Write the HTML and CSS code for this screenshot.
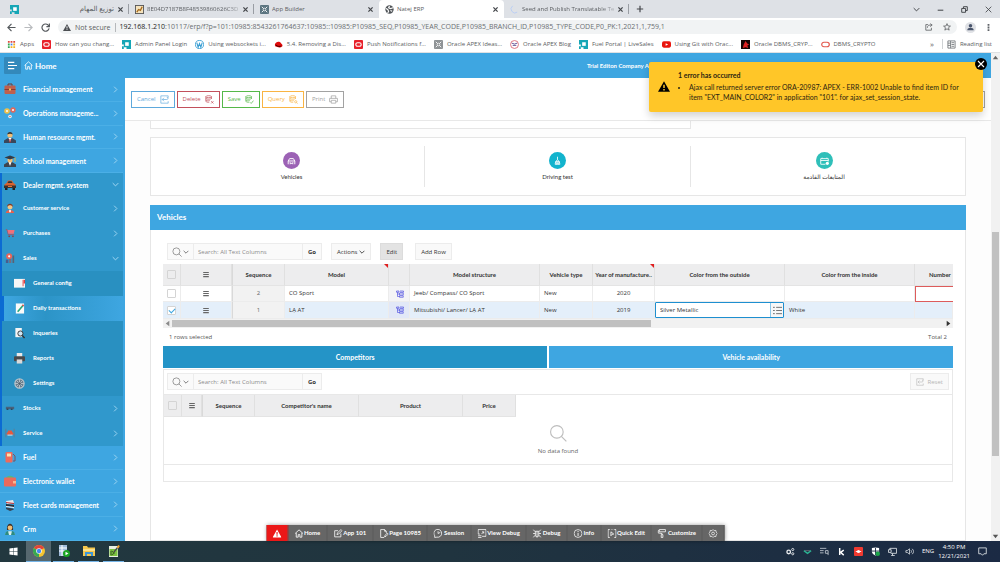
FILE: index.html
```html
<!DOCTYPE html>
<html lang="en">
<head>
<meta charset="utf-8">
<title>Natej ERP</title>
<link rel="stylesheet" href="styles.css">
</head>
<body>
<svg class="defs" aria-hidden="true">
  <symbol id="x" viewBox="0 0 10 10"><path d="M2 2l6 6M8 2L2 8" fill="none" stroke="currentColor" stroke-width="1.8"/></symbol>
  <symbol id="right" viewBox="0 0 10 10"><path d="M3 1l4 4-4 4" fill="none" stroke="currentColor" stroke-width="1.3"/></symbol>
  <symbol id="down" viewBox="0 0 10 10"><path d="M1 3l4 4 4-4" fill="none" stroke="currentColor" stroke-width="1.4"/></symbol>
  <symbol id="search" viewBox="0 0 16 16"><circle cx="7" cy="7" r="5.6" fill="none" stroke="currentColor"/><path d="M11 11l4.400 4.400" stroke="currentColor"/></symbol>
  <symbol id="burger" viewBox="0 0 10 10"><path d="M1 2h8M1 5h8M1 8h8" stroke="currentColor" stroke-width="1.500"/></symbol>
  <symbol id="home" viewBox="0 0 16 16"><path d="M1 8l7-6.500L15 8M3 7v7.500h3.500V10h3v4.500H13V7" fill="none" stroke="currentColor" stroke-width="1.500"/></symbol>
  <symbol id="warn" viewBox="0 0 16 14"><path fill-rule="evenodd" d="M8 0L16 14H0zM7 4.500v4.500h2V4.500zM7 10.300v1.900h2v-1.900z" fill="currentColor"/></symbol>
  <symbol id="undo" viewBox="0 0 16 16"><path d="M14.500 5V1.500h-13v13h13V11M4 8h8c3 0 3-4 0-4M7 5L4 8l3 3" fill="none" stroke="currentColor" stroke-width="1.200"/></symbol>
  <symbol id="db" viewBox="0 0 16 16"><path d="M1.500 3v8c0 2 5 2 6 2M11.500 3v4M1.500 6c1 2 9 2 10 0M1.500 9c1 1.500 5 1.500 7 1" fill="none" stroke="currentColor" stroke-width="1.300"/><ellipse cx="6.500" cy="3" rx="5" ry="1.800" fill="none" stroke="currentColor" stroke-width="1.300"/></symbol>
  <symbol id="tree" viewBox="0 0 16 16"><path d="M1 2h5v2.500H1zM3 4.500V13h4M3 8h4M7 6h7.500v4H7zM7 11.500h7.500v3H7zM8 2h7v2.500H8" fill="none" stroke="currentColor" stroke-width="1.300"/></symbol>
  <symbol id="oracle" viewBox="0 0 10 10"><rect width="10" height="10" rx="1" fill="#e8202a"/><rect x="2" y="3" width="6" height="4" rx="2" fill="none" stroke="#fff" stroke-width="1.200"/></symbol>
  <symbol id="teal" viewBox="0 0 10 10"><path d="M0 0h10v10H5V8H2V5H0z" fill="#16a6b6"/><rect x="3.500" y="2.500" width="4" height="4" fill="#fff"/><path d="M0 7h2v3H0z" fill="#16a6b6"/></symbol>
  <symbol id="apex" viewBox="0 0 10 10"><rect width="10" height="10" rx="1" fill="currentColor"/><path d="M2 2l2 2m2 2l2 2M8 2L6 4M4 6L2 8" stroke="#fff"/><circle cx="5" cy="5" r="1.500" fill="none" stroke="#fff" stroke-width=".8"/></symbol>
</svg>

<header class="browser">
  <div class="tabs">
    <div class="tab"><svg class="fav"><use href="#teal"/></svg><span class="tab-title" dir="rtl">توزيع المهام</span><button class="close" aria-label="Close tab"><svg><use href="#x"/></svg></button></div>
    <div class="tab"><svg class="fav" viewBox="0 0 10 10"><rect x=".5" y=".5" width="9" height="9" fill="#f5e3bd" stroke="#555"/><path d="M2 8l2-3 2 1 2-4" fill="none" stroke="#a66a1c" stroke-width="1.500"/></svg><span class="tab-title fade">8E04D7187B8F48539860626C3D</span><button class="close" aria-label="Close tab"><svg><use href="#x"/></svg></button></div>
    <div class="tab last-bg"><svg class="fav slate"><use href="#apex"/></svg><span class="tab-title">App Builder</span><button class="close" aria-label="Close tab"><svg><use href="#x"/></svg></button></div>
    <div class="tab active"><svg class="fav" viewBox="0 0 10 10"><circle cx="5" cy="5" r="4.600" fill="#4f5357"/><path d="M1 4l2 1 1 2-1 2M5 1l-1 2 2 1 3-1M6 6l2 1" stroke="#fff" fill="none" stroke-width="1.300"/></svg><span class="tab-title">Natej ERP</span><button class="close" aria-label="Close tab"><svg><use href="#x"/></svg></button></div>
    <div class="tab"><svg class="fav" viewBox="0 0 10 10"><path d="M3 1a4.300 4.300 0 1 0 5 7" fill="none" stroke="#b8cdf5"/></svg><span class="tab-title fade">Seed and Publish Translatable Te</span><button class="close" aria-label="Close tab"><svg><use href="#x"/></svg></button></div>
    <button class="new-tab" aria-label="New tab"><svg viewBox="0 0 10 10"><path d="M5 1v8M1 5h8" stroke="currentColor" stroke-width="1.500"/></svg></button>
    <div class="window-controls">
      <button aria-label="Search tabs"><svg><use href="#down"/></svg></button>
      <button aria-label="Minimize"><svg viewBox="0 0 10 10"><path d="M1 6h8" stroke="currentColor" stroke-width="1.500"/></svg></button>
      <button aria-label="Restore"><svg viewBox="0 0 10 10"><path d="M1 3.500h5.500V9H1zM3.500 3V1H9v5.500H7" fill="none" stroke="currentColor" stroke-width="1.400"/></svg></button>
      <button aria-label="Close"><svg viewBox="0 0 10 10"><path d="M1 1l8 8M9 1L1 9" stroke="currentColor" stroke-width="1.200"/></svg></button>
    </div>
  </div>
  <div class="address-row">
    <button aria-label="Back"><svg viewBox="0 0 10 10"><path d="M9.500 5H1M5 1L1 5l4 4" fill="none" stroke="#55595d" stroke-width="1.300"/></svg></button>
    <button aria-label="Forward"><svg viewBox="0 0 10 10"><path d="M.5 5H9M5 1l4 4-4 4" fill="none" stroke="#b9bbbe" stroke-width="1.300"/></svg></button>
    <button aria-label="Reload"><svg viewBox="0 0 10 10"><path d="M8.500 3A4 4 0 1 0 9 6M9.300.5V4H6" fill="none" stroke="#55595d" stroke-width="1.300"/></svg></button>
    <div class="omnibox">
      <svg class="alert"><use href="#warn"/></svg><span class="insecure">Not secure</span>
      <span class="url"><b>192.168.1.210</b>:10117/erp/f?p=101:10985:8543261764637:10985::10985:P10985_SEQ,P10985_YEAR_CODE,P10985_BRANCH_ID,P10985_TYPE_CODE,P0_PK:1,2021,1,759,1</span>
      <svg class="omni-icon" viewBox="0 0 10 10"><path d="M4 2H1v7h7V6M3 6c0-3 2-3.500 5-3.500M6.500.8L9 2.500 6.500 4.500" fill="none" stroke="currentColor"/></svg>
      <svg class="omni-icon" viewBox="0 0 10 10"><path d="M5 .8l1.200 2.900 3.100.2-2.400 2 .8 3L5 7.300 2.300 8.900l.8-3-2.400-2 3.100-.2z" fill="none" stroke="currentColor"/></svg>
    </div>
    <svg class="avatar" viewBox="0 0 12 12"><circle cx="6" cy="6" r="6" fill="#dfe1e5"/><circle cx="6" cy="4" r="1.900" fill="#49546b"/><path d="M2.500 9c0-3.500 7-3.500 7 0z" fill="#49546b"/></svg>
    <button aria-label="Menu"><svg viewBox="0 0 10 10"><path d="M4 1h2v2H4zM4 4h2v2H4zM4 7h2v2H4z" fill="#5f6368"/></svg></button>
  </div>
  <nav class="bookmarks">
    <a href="#" class="apps"><svg viewBox="0 0 10 10"><path d="M1 1h2v2H1zM4 1h2v2H4zM7 1h2v2H7z" fill="#e0483b"/><path d="M1 4h2v2H1zM1 7h2v2H1z" fill="#36a853"/><path d="M4 4h2v2H4z" fill="#4285f4"/><path d="M4 7h2v2H4zM7 4h2v2H7zM7 7h2v2H7z" fill="#f2b01e"/></svg>Apps</a>
    <a href="#"><svg><use href="#oracle"/></svg>How can you chang...</a>
    <a href="#"><svg><use href="#teal"/></svg>Admin Panel Login</a>
    <a href="#"><svg viewBox="0 0 10 10"><circle cx="5" cy="5" r="4.500" fill="#fff" stroke="#3b9fd4"/><path d="M2 3l1.500 5L5 4l1.500 4L8 3" fill="none" stroke="#3b9fd4" stroke-width="1.200"/></svg>Using websockets i...</a>
    <a href="#"><svg viewBox="0 0 10 10"><path d="M1 5c1-4 6-4 7-1 3 2 1 5-3 4S1 7 1 5z" fill="#e10b0b"/><path d="M2 5.500c2 2 5 2 6 1" stroke="#300" fill="none"/></svg>5.4. Removing a Dis...</a>
    <a href="#"><svg><use href="#oracle"/></svg>Push Notifications f...</a>
    <a href="#"><svg class="grey"><use href="#apex"/></svg>Oracle APEX Ideas...</a>
    <a href="#"><svg viewBox="0 0 10 10"><circle cx="5" cy="5" r="4.400" fill="#fff" stroke="#db6a79"/><path d="M2 3.500l3 1 3-1M3 6h4" stroke="#5a4a90" fill="none"/></svg>Oracle APEX Blog</a>
    <a href="#"><svg><use href="#teal"/></svg>Fuel Portal | LiveSales</a>
    <a href="#"><svg viewBox="0 0 10 10"><rect y="1.500" width="10" height="7" rx="2" fill="#e9150e"/><path d="M4 3.500v3L6.800 5z" fill="#fff"/></svg>Using Git with Orac...</a>
    <a href="#"><svg viewBox="0 0 10 10"><rect width="10" height="10" fill="#150505"/><path d="M5 1l2 3 2 1-2 1 1 3-3-1-3 1 1-4z" fill="#d22"/></svg>Oracle DBMS_CRYP...</a>
    <a href="#"><svg viewBox="0 0 10 10"><rect x=".8" y="2.500" width="8.400" height="5" rx="2.500" fill="none" stroke="#e2574c" stroke-width="1.300"/></svg>DBMS_CRYPTO</a>
    <span class="more">»</span>
    <a href="#" class="reading"><svg viewBox="0 0 10 10"><path d="M1 1h8v8H1zM4 1v8M5 3h3M5 5h3M5 7h3M1 3.500h3M1 6h3" fill="none" stroke="#6b6f73" stroke-width=".9"/></svg>Reading list</a>
  </nav>
</header>

<div class="viewport">
  <div class="app">
    <header class="app-header">
      <button class="nav-toggle" aria-label="Toggle menu"><svg viewBox="0 0 10 10"><path d="M0 1.500h7M0 5h10M0 8.500h7" stroke="currentColor" stroke-width="1.300"/></svg></button>
      <a href="#" class="brand"><svg><use href="#home"/></svg>Home</a>
      <span class="company">Trial Editon Company A</span>
    </header>
    <div class="app-body">
      <nav class="sidebar">
        <a href="#"><svg viewBox="0 0 12 12"><path d="M4 3V1h4v2" fill="none" stroke="#6b3a35"/><rect x="0.500" y="2.500" width="11" height="8.500" rx="1" fill="#c0604d"/><path d="M.5 6.500h11" stroke="#8a3b31"/><path d="M5 5.500h2v2H5z" fill="#f0c05a"/></svg><span>Financial management</span><svg class="chev"><use href="#right"/></svg></a>
        <a href="#"><svg viewBox="0 0 12 12"><circle cx="3" cy="4" r="2.800" fill="#f0c04a"/><circle cx="3" cy="4" r="1" fill="#fff"/><circle cx="9" cy="3" r="2.700" fill="#e2695b"/><circle cx="9" cy="3" r="1" fill="#fff"/><circle cx="6" cy="9.500" r="1.800" fill="#dff3fb"/><circle cx="6" cy="9.500" r=".8" fill="#e2695b"/></svg><span>Operations manageme...</span><svg class="chev"><use href="#right"/></svg></a>
        <a href="#"><svg viewBox="0 0 12 12"><path d="M0 12V9.500L4 7h4l4 2.500V12z" fill="#39475c"/><path d="M4.500 7h3L6 11z" fill="#fff"/><path d="M5.500 8h1v3.500h-1z" fill="#d33"/><circle cx="6" cy="4" r="2.600" fill="#f2bd73"/><path d="M3.400 3.500C3 0 9 0 8.600 3.500 7 2.500 5 2.500 3.400 3.500z" fill="#333"/></svg><span>Human resource mgmt.</span><svg class="chev"><use href="#right"/></svg></a>
        <a href="#"><svg viewBox="0 0 12 12"><path d="M0 12V9.500L4 7h4l4 2.500V12z" fill="#3d444f"/><path d="M4.500 7h3L6 11z" fill="#fff"/><circle cx="6" cy="5" r="2.500" fill="#f2bd73"/><path d="M6 .5l5.500 2L6 4.500.5 2.500z" fill="#333b48"/><path d="M11 2.500V7" stroke="#e0b040"/></svg><span>School management</span><svg class="chev"><use href="#right"/></svg></a>
        <a href="#" class="open"><svg viewBox="0 0 12 12"><path d="M2.500 4L4 1.500h4L9.500 4l2 1.500V9H.5V5.500z" fill="#d9622f"/><path d="M3.500 4l1-1.800h3l1 1.800z" fill="#333"/><path d="M0 6.500h12V9H0z" fill="#3a302c"/><path d="M1 9h2.500v2H1zM8.500 9H11v2H8.500z" fill="#222"/><path d="M4 7h4v1H4z" fill="#e5763e"/></svg><span>Dealer mgmt. system</span><svg class="chev"><use href="#down"/></svg></a>
        <div class="sub">
          <a href="#"><svg viewBox="0 0 12 12"><path d="M1 12c0-5 10-5 10 0z" fill="#e8604c"/><circle cx="6" cy="4.500" r="3" fill="#f4c584"/><path d="M2.500 5C2-.5 10-.5 9.500 5 8 2 4 2 2.500 5z" fill="#7a3a2a"/><path d="M5 8h2v3H5z" fill="#fff"/></svg><span>Customer service</span><svg class="chev"><use href="#right"/></svg></a>
          <a href="#"><svg viewBox="0 0 12 12"><path d="M1 2h1.500l1.500 6h7" fill="none" stroke="#b34a5c"/><path d="M3 2.500h8.500l-1 4.500H4z" fill="#f0707a"/><circle cx="5" cy="10" r="1" fill="#933"/><circle cx="9.500" cy="10" r="1" fill="#933"/></svg><span>Purchases</span><svg class="chev"><use href="#right"/></svg></a>
          <a href="#"><svg viewBox="0 0 12 12"><circle cx="5" cy="4" r="3.600" fill="#e8655a"/><circle cx="5" cy="4" r="1.300" fill="#fff"/><path d="M1 8h3v4H1z" fill="#4a5b8c"/><path d="M5 7h2.500v5H5z" fill="#7b6a78"/><path d="M9 3h2v9H9z" fill="#5a6272"/></svg><span>Sales</span><svg class="chev"><use href="#down"/></svg></a>
          <div class="subsub">
            <a href="#"><svg viewBox="0 0 12 12"><rect y="1" width="12" height="9.500" fill="#f7f7f7"/><path d="M9 2h2v7H9z" fill="#e99"/><path d="M10.500 2H12v4h-1.500z" fill="#e04040"/></svg><span>General config</span></a>
            <a href="#" class="current"><svg viewBox="0 0 12 12"><rect x="2" y="0.500" width="9" height="11" fill="#fafafa"/><path d="M4 9.500l6-7" stroke="#2aa77a" stroke-width="1.800"/><path d="M9.300 3.200L10.500 2" stroke="#e05050" stroke-width="2"/></svg><span>Daily transactions</span></a>
            <a href="#"><svg viewBox="0 0 12 12"><path d="M1.500 0h7v10h-7z" fill="#f5f5f5"/><circle cx="7" cy="6" r="2.800" fill="#cfe6f5" stroke="#333"/><path d="M9 8l2.500 3" stroke="#333" stroke-width="1.500"/></svg><span>Inqueries</span></a>
            <a href="#"><svg viewBox="0 0 12 12"><path d="M3 0h6v5H3z" fill="#e9e9e9"/><rect y="3.500" width="12" height="5.500" rx="1" fill="#48484a"/><path d="M3 7h6v4.500H3z" fill="#d9d9d9"/></svg><span>Reports</span></a>
            <a href="#"><svg viewBox="0 0 12 12"><circle cx="6" cy="6" r="5" fill="#6c7f8e" stroke="#b9c3ca" stroke-width="1.400"/><path d="M6 1v10M1 6h10M2.500 2.500l7 7M9.500 2.500l-7 7" stroke="#b9c3ca"/><circle cx="6" cy="6" r="1.500" fill="#54616c"/></svg><span>Settings</span></a>
          </div>
          <a href="#"><svg viewBox="0 0 12 12"><path d="M1 4.500h10v3H1z" fill="#48617c"/><path d="M2 7.500h2M7 7.500h2" stroke="#222"/></svg><span>Stocks</span><svg class="chev"><use href="#right"/></svg></a>
          <a href="#"><svg viewBox="0 0 12 12"><path d="M1 1v10M11 1v10" stroke="#6a7a88"/><path d="M3 5l1-2h4l1 2 1 1v2H2V6z" fill="#e5593e"/><path d="M3 8h6v1H3z" fill="#eee"/></svg><span>Service</span><svg class="chev"><use href="#right"/></svg></a>
        </div>
        <a href="#"><svg viewBox="0 0 12 12"><rect x="1.500" y="1" width="7" height="10.500" rx="1" fill="#ef6a5b"/><path d="M3 2.500h4v3H3z" fill="#fbe3b0"/><path d="M9 3l2 2v5H9" fill="none" stroke="#7d5160"/></svg><span>Fuel</span><svg class="chev"><use href="#right"/></svg></a>
        <a href="#"><svg viewBox="0 0 12 12"><path d="M2 3c2-3 6-3 8 0z" fill="#58b879"/><rect y="2.500" width="12" height="9" rx="1" fill="#ea6a5c"/><path d="M9 6h3v2.500H9z" fill="#f7b68f"/></svg><span>Electronic wallet</span><svg class="chev"><use href="#right"/></svg></a>
        <a href="#"><svg viewBox="0 0 12 12"><path d="M2 2l7-1 1 3-7 1z" fill="#e9e9e9"/><path d="M2 3l8 1v1L2 4z" fill="#cf3030"/><path d="M2 5l8 1v2L2 7z" fill="#262f3a"/><path d="M2 7.500l8 1" stroke="#eee"/><path d="M2 8.500l7 1 1 1-4 1.500-4-2z" fill="#35414f"/></svg><span>Fleet cards management</span><svg class="chev"><use href="#right"/></svg></a>
        <a href="#"><svg viewBox="0 0 12 12"><path d="M1 12c0-5 10-5 10 0z" fill="#d9efe9"/><path d="M1 12c0-3 2-4 3-4l1 4zM11 12c0-3-2-4-3-4l-1 4z" fill="#2c8b80"/><path d="M3 7C2-1.500 10-1.500 9 7z" fill="#3a2f2a"/><circle cx="6" cy="4.800" r="2.400" fill="#f2bd73"/></svg><span>Crm</span><svg class="chev"><use href="#right"/></svg></a>
      </nav>

      <main class="main">
        <div class="actions">
          <button class="act blue">Cancel<svg><use href="#undo"/></svg></button>
          <button class="act red">Delete<svg viewBox="0 0 16 16"><use href="#db"/><path d="M11 11l4 4M15 11l-4 4" stroke="currentColor" stroke-width="1.300"/></svg></button>
          <button class="act green">Save<svg viewBox="0 0 16 16"><use href="#db"/><path d="M9 13l2 2 4-5" fill="none" stroke="currentColor" stroke-width="1.300"/></svg></button>
          <button class="act orange">Query<svg viewBox="0 0 16 16"><use href="#db"/><circle cx="12" cy="12" r="2" fill="none" stroke="currentColor" stroke-width="1.200"/><path d="M13.500 13.500l2 2" stroke="currentColor"/></svg></button>
          <button class="act grey">Print<svg viewBox="0 0 16 16"><path d="M4 6V1.500h8V6M4 12H1V6h14v6h-3M4 9.500h8v5H4z" fill="none" stroke="currentColor" stroke-width="1.300"/></svg></button>
          <button class="act grey end" aria-label="More"><svg><use href="#down"/></svg></button>
        </div>
        <div class="content">
          <section class="strip"></section>
          <section class="cards">
            <a href="#"><svg class="dot" viewBox="0 0 18 18"><circle cx="9" cy="9" r="9" fill="#9c62b5"/><path d="M5.500 13V9.500L7 7h4l1.500 2.500V13M5.500 9.500h7M7 11h1M10 11h1M7.500 13v-1h3v1" fill="none" stroke="#fff"/></svg>Vehicles</a>
            <a href="#"><svg class="dot" viewBox="0 0 18 18"><circle cx="9" cy="9" r="9" fill="#12b3cd"/><path d="M9 5v3l-2 2.500h4L9 8M6.500 13l.5-2.500h4l.5 2.500zM8 13v-1h2v1" fill="none" stroke="#fff" stroke-width=".9"/></svg>Driving test</a>
            <a href="#"><svg class="dot" viewBox="0 0 18 18"><circle cx="9" cy="9" r="9" fill="#2fbfb9"/><path d="M10 13H5V7h8v3M5 9h8M6.500 6v1M11.500 6v1" fill="none" stroke="#fff" stroke-width=".9"/><circle cx="12" cy="12" r="1.700" fill="#fff"/></svg>المتابعات القادمة</a>
          </section>
          <section class="vehicles">
            <h2>Vehicles</h2>
            <div class="vehicles-body">
              <div class="grid-tools">
                <div class="finder">
                  <button class="find-menu" aria-label="Search options"><svg class="lens"><use href="#search"/></svg><svg class="caret"><use href="#down"/></svg></button>
                  <input type="text" aria-label="Search" placeholder="Search: All Text Columns">
                  <button class="go">Go</button>
                </div>
                <button class="tool">Actions<svg class="caret"><use href="#down"/></svg></button>
                <button class="tool pressed">Edit</button>
                <button class="tool add">Add Row</button>
              </div>
              <div class="grid-wrap">
              <table class="grid">
                <colgroup><col class="c-check"><col class="c-menu"><col class="c-seq"><col class="c-model"><col class="c-icon"><col class="c-wide"><col class="c-seq"><col class="c-year"><col class="c-wide"><col class="c-wide"><col></colgroup>
                <thead><tr><th><input type="checkbox" aria-label="Select all"></th><th><svg class="rows"><use href="#burger"/></svg></th><th class="frozen">Sequence</th><th class="required">Model</th><th></th><th>Model structure</th><th>Vehicle type</th><th class="required">Year of manufacture..</th><th>Color from the outside</th><th>Color from the inside</th><th class="cut">Number</th></tr></thead>
                <tbody>
                  <tr><td><input type="checkbox" aria-label="Select row 2"></td><td class="mid"><svg class="rows"><use href="#burger"/></svg></td><td class="frozen mid">2</td><td>CO Sport</td><td class="tree"><svg><use href="#tree"/></svg></td><td>Jeeb/ Compass/ CO Sport</td><td>New</td><td class="mid">2020</td><td></td><td></td><td class="invalid"></td></tr>
                  <tr class="selected"><td><input type="checkbox" aria-label="Select row 1" checked></td><td class="mid"><svg class="rows"><use href="#burger"/></svg></td><td class="frozen mid">1</td><td>LẠ AT</td><td class="tree"><svg><use href="#tree"/></svg></td><td>Mitsubishi/ Lancer/ LẠ AT</td><td>New</td><td class="mid">2019</td><td class="editing"><div class="lov"><input type="text" aria-label="Color from the outside" value="Silver Metallic"><button aria-label="List of values"><svg viewBox="0 0 10 10"><path d="M0 1.500h2M0 5h2M0 8.500h2M3.500 1.500H10M3.500 5H10M3.500 8.500H10" stroke="currentColor"/></svg></button></div></td><td>White</td><td></td></tr>
                </tbody>
              </table>
              </div>
              <div class="hscroll"><svg viewBox="0 0 10 10"><path d="M7 2v6L3 5z" fill="#8a8a8a"/></svg><div class="track"><div class="thumb"></div></div><svg viewBox="0 0 10 10"><path d="M3 2v6l4-3z" fill="#333"/></svg></div>
              <div class="grid-foot"><span>1 rows selected</span><span>Total 2</span></div>
              <div class="detail-tabs"><button class="on">Competitors</button><button>Vehicle availability</button></div>
              <div class="detail">
                <div class="grid-tools">
                  <div class="finder">
                    <button class="find-menu" aria-label="Search options"><svg class="lens"><use href="#search"/></svg><svg class="caret"><use href="#down"/></svg></button>
                    <input type="text" aria-label="Search competitors" placeholder="Search: All Text Columns">
                    <button class="go">Go</button>
                  </div>
                  <button class="tool reset"><svg><use href="#undo"/></svg>Reset</button>
                </div>
                <table class="grid small">
                  <colgroup><col class="c-check"><col class="c-menu-s"><col class="c-seq"><col class="c-name"><col class="c-name"><col class="c-seq"></colgroup>
                  <thead><tr><th><input type="checkbox" aria-label="Select all competitors"></th><th><svg class="rows"><use href="#burger"/></svg></th><th class="frozen">Sequence</th><th>Competitor's name</th><th>Product</th><th>Price</th></tr></thead>
                </table>
                <div class="empty"><svg><use href="#search"/></svg>No data found</div>
                <div class="detail-foot"></div>
              </div>
            </div>
          </section>
        </div>
      </main>
    </div>

    <div class="notice" role="alert">
      <svg class="notice-icon"><use href="#warn"/></svg>
      <div><strong>1 error has occurred</strong>
      <ul><li>Ajax call returned server error ORA-20987: APEX - ERR-1002 Unable to find item ID for item "EXT_MAIN_COLOR2" in application "101". for ajax_set_session_state.</li></ul></div>
      <button class="notice-close" aria-label="Close"><svg viewBox="0 0 10 10"><path d="M2 2l6 6M8 2L2 8" stroke="currentColor" stroke-width="1.100"/></svg></button>
    </div>

    <nav class="devbar">
      <button class="err" aria-label="Errors"><svg><use href="#warn"/></svg></button>
      <button><svg><use href="#home"/></svg>Home</button>
      <button><svg viewBox="0 0 16 16"><path d="M13 8v6H2V3h6M6 10l1-3 6-6 2 2-6 6z" fill="none" stroke="currentColor" stroke-width="1.400"/></svg>App 101</button>
      <button><svg viewBox="0 0 16 16"><path d="M8 15H2V1h7l3 3v3M9 1v3h3M9 14l1-3 4-4 1.500 2-4 4z" fill="none" stroke="currentColor" stroke-width="1.400"/></svg>Page 10985</button>
      <button><svg viewBox="0 0 16 16"><path d="M2 12a7 7 0 1 1 4 2.500L2 15zM8 4v4l4-2" fill="none" stroke="currentColor" stroke-width="1.400"/></svg>Session</button>
      <button><svg viewBox="0 0 16 16"><path d="M4 9H1V1h14v12H8M7 9l4-4M8 5h3v3M1 12h6M1 15h6" fill="none" stroke="currentColor" stroke-width="1.400"/></svg>View Debug</button>
      <button><svg viewBox="0 0 16 16"><path d="M5 4h6v8c-1 3-5 3-6 0zM8 4v10M1 1l4 4M15 1l-4 4M1 8h4M11 8h4M1 15l4-4M15 15l-4-4" fill="none" stroke="currentColor" stroke-width="1.400"/></svg>Debug</button>
      <button><svg viewBox="0 0 16 16"><circle cx="8" cy="8" r="7" fill="none" stroke="currentColor" stroke-width="1.300"/><path d="M8 3.500v2M8 7v5.500" stroke="currentColor" stroke-width="1.600"/></svg>Info</button>
      <button><svg viewBox="0 0 16 16"><path d="M4 1H1v14h3M12 1h3v14h-3M6 1h1M9 1h1M6 5l5 4-3 .5L6 12z" fill="none" stroke="currentColor" stroke-width="1.400"/></svg>Quick Edit</button>
      <button><svg viewBox="0 0 16 16"><path d="M3 1h11v4H3zM3 3H1v4l7 1v2M6.500 10h3v5h-3z" fill="none" stroke="currentColor" stroke-width="1.400"/></svg>Customize</button>
      <button aria-label="Options"><svg viewBox="0 0 16 16"><path d="M8 1l2 2 3-.5.500 3L15.500 8l-2 2.500-.5 3-3-.5-2 2-2-2-3 .5-.5-3L.5 8l2-2.500.5-3L6 3z" fill="none" stroke="currentColor" stroke-width="1.300"/><circle cx="8" cy="8" r="2.500" fill="none" stroke="currentColor" stroke-width="1.300"/></svg></button>
    </nav>
  </div>
  <div class="vscroll"><svg viewBox="0 0 10 10"><path d="M2 7h6L5 3z" fill="#666"/></svg><div class="vtrack"><div class="vthumb"></div></div><svg viewBox="0 0 10 10"><path d="M2 3h6L5 7z" fill="#555"/></svg></div>
</div>

<footer class="taskbar">
  <button class="start" aria-label="Start"><svg viewBox="0 0 10 10"><path d="M.5 1.800L4.500 1.200v3.500h-4zM5 1.100L9.500.5v4.200H5zM.5 5.200h4v3.600L.5 8.200zM5 5.200h4.500v4.300L5 8.900z" fill="#fff"/></svg></button>
  <button class="task focus" aria-label="Chrome"><svg viewBox="0 0 12 12"><circle cx="6" cy="6" r="6" fill="#f4c430"/><path d="M6 6L.8 3A6 6 0 0 1 11.200 3z" fill="#e2453a"/><path d="M6 6L.8 3A6 6 0 0 0 6 12z" fill="#36a853"/><circle cx="6" cy="6" r="2.800" fill="#fff"/><circle cx="6" cy="6" r="2.200" fill="#4688f1"/></svg></button>
  <button class="task" aria-label="SQL Developer"><svg viewBox="0 0 12 12"><path d="M1 0h8v11H1z" fill="#9fb9d8"/><path d="M1 3h8M1 6h8M4 0v11" stroke="#fff"/><circle cx="8.500" cy="8.500" r="3.500" fill="#19a51f"/><path d="M7.500 6.800v3.400l3-1.700z" fill="#fff"/></svg></button>
  <button class="task" aria-label="File Explorer"><svg viewBox="0 0 12 12"><path d="M0 1h4l1 1.500h7V11H0z" fill="#f6c64c"/><path d="M0 4h12v2H0z" fill="#fbe08c"/><path d="M2 7h8v4H8V9H4v2H2z" fill="#3d96d8"/></svg></button>
  <button class="task" aria-label="Notepad++"><svg viewBox="0 0 12 12"><path d="M1 1h9v11H1z" fill="#e9efe2"/><path d="M1.500 4h8v7h-8z" fill="#7cc242"/><path d="M3 6v4M3.500 6l3 2-3 2" fill="none" stroke="#375a20"/><path d="M6 7l4-5" stroke="#4a4a4a" stroke-width="1.300"/><path d="M9.500 3l1.500-2.500" stroke="#f0a030" stroke-width="2"/></svg></button>
  <div class="tray">
    <svg viewBox="0 0 10 10"><circle cx="3" cy="5.500" r="2" fill="none" stroke="#e6e9ec" stroke-width="1.500"/><circle cx="7.500" cy="2.800" r="1.200" fill="none" stroke="#e6e9ec"/><circle cx="7.500" cy="7.500" r="1.200" fill="none" stroke="#e6e9ec"/></svg>
    <svg viewBox="0 0 10 10"><path d="M1 4l4 3 4-3" fill="none" stroke="#2bb594" stroke-width="1.500"/><path d="M2 4h6" stroke="#667"/></svg>
    <svg viewBox="0 0 10 10"><path d="M0 1.500h7M0 4h4M0 6.500h4M9 9V4H6v3h3" fill="none" stroke="#b9c1c9"/></svg>
    <svg viewBox="0 0 10 10"><path d="M3 1v8M7.500 3.500L4 6l3.500 3" fill="none" stroke="#fff" stroke-width="1.600"/></svg>
    <svg viewBox="0 0 10 10"><rect width="10" height="10" rx="1" fill="#f13a30"/><circle cx="5" cy="5" r="1.800" fill="#fff"/><path d="M2 5h6" stroke="#fff"/></svg>
    <svg viewBox="0 0 10 10"><path d="M1 1l4-.5L9 1v4c0 3-4 4.500-4 4.500S1 8 1 5z" fill="#fff"/><path d="M5 1v8M1 4.500h8" stroke="#1b2b42"/><circle cx="7.500" cy="7.500" r="2.500" fill="#1ca54a"/></svg>
    <svg viewBox="0 0 10 10"><path d="M2 3V1.500h7.500V7H3M5 7v2.500M3.500 9.500h4M.5 3h3v3h-3z" fill="none" stroke="#d6dbe0"/></svg>
    <svg viewBox="0 0 10 10"><path d="M1 4h1.500L5 2v6L2.500 6H1zM6.500 3.500c1 1 1 2 0 3M8 2c2 2 2 4 0 6" fill="none" stroke="#d6dbe0" stroke-width=".9"/></svg>
    <div class="clock"><span>ENG</span><time>4:50 PM<br>12/21/2021</time></div>
    <svg viewBox="0 0 10 10"><path d="M.8 1h8.400v6.500H6.500L5 9.200 3.500 7.500H.8z" fill="none" stroke="#d6dbe0"/></svg>
  </div>
</footer>
</body>
</html>
```
FILE: styles.css
```css
* { box-sizing: border-box; }
html, body { height: 100%; }
body {
  margin: 0; display: flex; flex-direction: column; overflow: hidden;
  font-family: Lato, "Noto Sans", "DejaVu Sans", sans-serif; font-size: 7px; line-height: 10px; color: #333; background: #fff;
}
a { color: inherit; text-decoration: none; }
button, input { font: inherit; color: inherit; margin: 0; padding: 0; border: 0; background: none; }
button { display: flex; align-items: center; justify-content: center; }
svg { display: block; flex: none; width: 9px; height: 9px; }
.defs { position: absolute; width: 0; height: 0; }

/* Browser frame */
.browser { flex: none; font-family: "Open Sans", "DejaVu Sans", sans-serif; color: #5a5d61; }
.tabs { display: flex; align-items: center; height: 18px; background: #dee1e6; }
.tab { display: flex; align-items: center; gap: 3px; width: 125px; height: 18px; padding: 0 5px 0 6px; }
.tab:not(.active) { background: linear-gradient(#999da3, #999da3) right center / 1px 10px no-repeat; }
.tab.last-bg { background: none; }
.tab.active { background: #fff; border-radius: 4px 4px 0 0; }
.tab:first-child { width: 129px; padding-left: 10px; }
.tab-title { flex: 1; min-width: 0; font-size: 6px; white-space: nowrap; overflow: hidden; }
.tab:first-child .tab-title { font-size: 7px; }
.tab-title.fade { mask-image: linear-gradient(90deg, #000 85%, rgba(0, 0, 0, .3)); }
.close svg { width: 7px; height: 7px; }
.close { color: #44474b; }
.slate { color: #5c7580; }
.grey { color: #8f9396; }
.new-tab { width: 22px; color: #44474b; }
.new-tab svg { width: 8px; height: 8px; }
.window-controls { display: flex; margin-left: auto; color: #44474b; }
.window-controls button { width: 24px; }
.window-controls svg { width: 7px; height: 7px; }
.address-row { display: flex; align-items: center; gap: 8px; height: 18px; padding: 0 7px; }
.omnibox { flex: 1; min-width: 0; display: flex; align-items: center; gap: 4px; height: 14px; padding: 0 6px 0 5px; border-radius: 7px; background: #f1f3f4; }
.omnibox .alert { width: 8px; height: 7px; color: #4c4f53; }
.insecure { padding-right: 4px; border-right: 1px solid #b5b8bb; line-height: 9px; }
.url { flex: 1; min-width: 0; overflow: hidden; white-space: nowrap; color: #6b6f73; }
.url b { font-weight: 400; color: #222; }
.omni-icon { width: 8px; height: 8px; margin-left: 6px; }
.avatar { width: 11px; height: 11px; }
.bookmarks { display: flex; align-items: center; gap: 8px; height: 17px; padding: 0 8px 0 7px; font-size: 6px; white-space: nowrap; border-bottom: 1px solid #dfe1e3; }
.bookmarks a { display: flex; align-items: center; gap: 4px; }
.bookmarks .more { margin-left: auto; font-size: 8px; }
.bookmarks .reading { padding-left: 4px; border-left: 1px solid #cfd2d4; }

/* Application shell */
.viewport { flex: 1; min-height: 0; display: flex; }
.app { flex: 1; min-width: 0; display: flex; flex-direction: column; position: relative; }
.app-header { flex: none; display: flex; align-items: center; height: 25px; padding-left: 4px; background: #3ea6e1; color: #fff; font-weight: 700; }
.nav-toggle { width: 17px; height: 17px; background: #3389bb; border-radius: 1px; }
.brand { display: flex; align-items: center; gap: 2px; margin-left: 3px; font-size: 8px; }
.company { margin-left: auto; padding-right: 342px; font-size: 6px; }
.app-body { flex: 1; min-height: 0; display: flex; }
.sidebar { flex: none; display: flex; flex-direction: column; width: 125px; padding-right: 2px; background: #3ea6e1; color: #fff; font-weight: 700; }
.sidebar a { display: flex; align-items: center; padding: 0 4px; border-bottom: 1px solid #4bafe6; }
.sidebar > a { flex: 1; }
.sidebar a svg { width: 12px; height: 12px; }
.sidebar a span { flex: 1; margin-left: 7px; white-space: nowrap; }
.sidebar a .chev { width: 7px; height: 7px; color: #a5d8f3; }
.sidebar a.open, .sub { border-color: #2f97cb; border-left: 2px solid #0b6bd3; background: #3098cc; }
.sidebar a.open { padding-left: 2px; border-bottom: 0; }
.sub a { height: 25px; padding-left: 3px; border: 0; font-size: 6px; }
.sub a svg { width: 10px; height: 10px; }
.sub a span { margin-left: 8px; }
.subsub { background: #2990c1; }
.subsub a { padding-left: 12px; }
.subsub a svg { width: 11px; height: 11px; }
.subsub .current { padding-left: 10px; border-left: 2px solid #0b6bd3; background: linear-gradient(90deg, #3ea6e1, #2c94c7 35%, #3ea6e1); }

.main { flex: 1; min-width: 0; display: flex; flex-direction: column; background: #fdfdfd; font-family: "Open Sans", "DejaVu Sans", sans-serif; font-size: 6px; }
.actions { flex: none; display: flex; align-items: center; gap: 2px; height: 43px; padding: 0 6px; background: #fff; border-bottom: 1px solid #e8e8e8; }
.act { height: 17px; gap: 4px; padding: 0 5px; border: 1px solid; background: #fff; }
.act.blue { color: #5ea9dc; }
.act.red { color: #c2505c; }
.act.green { color: #55b849; }
.act.orange { color: #f9b443; }
.act.grey { color: #a2a2a2; }
.act.end { margin-left: auto; }
.content { flex: 1; min-height: 0; padding: 0 25px; display: flex; flex-direction: column; overflow: hidden; }
.strip { flex: none; width: 541px; height: 8px; background: #fff; border: 1px solid #e6e6e6; border-top: 0; }
.cards { flex: none; display: grid; grid-template-columns: 1fr 1fr 1fr; margin-top: 8px; padding: 8px 8px; height: 59px; background: #fff; border: 1px solid #e6e6e6; font-family: Lato, "DejaVu Sans", sans-serif; }
.cards a { display: flex; flex-direction: column; align-items: center; gap: 3px; padding-top: 6px; border-right: 1px solid #e6e6e6; }
.cards a:last-child { border: 0; }
.dot { width: 17px; height: 17px; }
.vehicles { flex: 1 0 auto; margin-top: 9px; background: #fff; border: 1px solid #e6e6e6; border-top: 0; }
.vehicles h2 { margin: 0 -1px; padding: 0 7px; font-family: Lato, sans-serif; font-size: 8px; line-height: 25px; font-weight: 700; color: #fff; background: #3ea6e1; }
.vehicles-body { padding: 13px 12px 0; }

/* Grid toolbar */
.grid-tools { display: flex; align-items: center; gap: 9px; padding: 0 4px 4px; }
.finder { display: flex; height: 17px; border: 1px solid #ececec; background: #fafafa; }
.find-menu { gap: 1px; width: 25px; color: #666; }
.lens { width: 10px; height: 10px; }
.caret { width: 6px; height: 6px; }
.finder input { width: 110px; padding: 0 4px; border: 1px solid #ececec; border-width: 0 1px; }
.finder input::placeholder { color: #8c8c8c; opacity: 1; }
.go { width: 18px; font-weight: 700; }
.tool { gap: 2px; height: 17px; padding: 0 5px; border: 1px solid #ececec; background: #f9f9f9; }
.tool.pressed { background: #e3e3e3; border-color: #dcdcdc; }
.tool.add { margin-left: 3px; }
.reset { margin-left: auto; color: #b5b5b5; gap: 4px; }
.reset svg { width: 8px; height: 8px; }

/* Data grids */
.grid-wrap { overflow: hidden; }
.grid { width: 100%; table-layout: fixed; border-collapse: separate; border-spacing: 0; }
.c-check { width: 18px; } .c-menu { width: 51px; } .c-menu-s { width: 20px; } .c-seq { width: 53px; }
.c-model { width: 104px; } .c-icon { width: 21px; } .c-wide { width: 130px; } .c-year { width: 62px; } .c-name { width: 104px; }
.grid th { position: relative; height: 22px; padding: 0; background: #ededee; border-right: 1px solid #e0e0e0; font-family: Lato, sans-serif; font-weight: 700; white-space: nowrap; overflow: hidden; border-bottom: 1px solid #e4e4e4; }
.grid td { height: 16px; padding: 0 4px; border-right: 1px solid #ececec; border-bottom: 1px solid #ececec; white-space: nowrap; line-height: 9px; }
.grid th:first-child, .grid td:first-child { padding: 0 4px; }
.grid .mid { text-align: center; }
.grid .frozen { border-left: 1px solid #d9d9d9; }
.grid td.frozen { background: #f2f2f2; color: #666; }
.grid input[type=checkbox] { appearance: none; display: block; width: 9px; height: 9px; border: 1px solid #d4d4d4; border-radius: 1px; background: transparent; }
.grid input[type=checkbox]:checked { background: #fff; }
.grid input[type=checkbox]:checked::before { content: ""; display: block; width: 5px; height: 3px; margin: 1px; border: solid #3ea6e1; border-width: 0 0 1px 1px; transform: rotate(-45deg); }
.grid td .rows, .grid th .rows { width: 8px; height: 7px; margin: 0 auto; color: #666; }
.required::after { content: ""; position: absolute; top: 0; right: 0; border: 2px solid #e02020; border-left-color: transparent; border-bottom-color: transparent; }
.grid th.cut { text-align: left; padding-left: 14px; border-right: 0; }
.grid td.tree { padding: 0 7px; background: #f4f4f6; color: #4c4ce0; }
.tree svg { width: 8px; height: 8px; }
.selected td { background: #e4effa; }
.grid .selected td.tree { background: #e2e8f7; }
.grid td.invalid { border: 1px solid #dd5b5b; border-right: 0; }
.grid td.editing { padding: 0; }
.lov { display: flex; height: 16px; border: 1px solid #1e8fd0; border-radius: 1px; background: #fff; }
.lov input { flex: 1; min-width: 0; padding: 0 4px; }
.lov button { width: 13px; border-left: 1px solid #8cc6e8; color: #666; background: #f7f7f7; }
.hscroll { display: flex; align-items: center; height: 9px; background: #f1f1f1; }
.hscroll .track { flex: 1; }
.hscroll .thumb { width: 62%; height: 7px; background: #c0c0c0; }
.grid-foot { display: flex; justify-content: space-between; padding: 4px 6px 4px; color: #555; }
.detail-tabs { display: flex; gap: 2px; font-family: Lato, sans-serif; font-size: 7px; }
.detail-tabs button { flex: 21 1 0; height: 22px; color: #fff; font-weight: 700; background: #3ea6e1; }
.detail-tabs .on { flex-grow: 20; background: #2494c7; }
.detail { margin-top: 1px; border: 1px solid #e8e8e8; }
.detail .grid-tools { padding: 3px 3px 4px; border-bottom: 1px solid #e8e8e8; }
.small { width: 352px; }
.empty { display: flex; flex-direction: column; align-items: center; gap: 4px; height: 47px; padding-top: 7px; color: #666; }
.empty svg { width: 18px; height: 18px; color: #bdbdbd; }
.detail-foot { height: 17px; border-top: 1px solid #e8e8e8; }

/* Error notification */
.notice { position: absolute; top: 9px; right: 8px; width: 334px; min-height: 50px; display: flex; padding: 8px 20px 6px 9px; background: #ffc628; border-radius: 2px; color: #2a2410; box-shadow: 0 4px 8px rgba(0, 0, 0, .18); }
.notice-icon { width: 12px; height: 11px; margin: 11px 8px 0 0; color: #000; }
.notice ul { margin: 2px 0 0; padding-left: 11px; }
.notice li::marker { font-size: 6px; }
.notice-close { position: absolute; top: -4px; right: -4px; width: 12px; height: 12px; border-radius: 6px; background: #000; color: #fff; }
.notice-close svg { width: 10px; height: 10px; }

/* Developer toolbar */
.devbar { position: absolute; bottom: 0; left: 50%; transform: translateX(-50%); display: flex; height: 16px; background: #666; color: #fff; font-size: 6px; font-weight: 700; white-space: nowrap; box-shadow: 0 0 4px rgba(0, 0, 0, .4); }
.devbar button { gap: 1px; padding: 0 6px; border-right: 1px solid #5b5b5b; }
.devbar .err { background: #eb1818; }

/* Page scrollbar */
.vscroll { flex: none; display: flex; flex-direction: column; align-items: center; width: 9px; background: #f1f1f1; }
.vtrack { flex: 1; width: 7px; padding-top: 170px; }
.vthumb { height: 224px; background: #c1c1c1; }

/* Taskbar */
.taskbar { flex: none; display: flex; height: 21px; background: linear-gradient(100deg, #22383f, #20343f 45%, #1b2a44); color: #fff; }
.start { width: 26px; }
.task { width: 21px; margin: 0 2px; border-bottom: 1px solid #76b5e8; }
.task svg { width: 12px; height: 12px; }
.task.focus { width: 25px; margin: 0; background: #56686f; }
.tray { display: flex; align-items: center; gap: 8px; margin-left: auto; padding-right: 13px; font-family: "Open Sans", sans-serif; font-size: 6px; line-height: 9px; text-align: center; }
.clock { display: flex; align-items: center; gap: 4px; }
```
